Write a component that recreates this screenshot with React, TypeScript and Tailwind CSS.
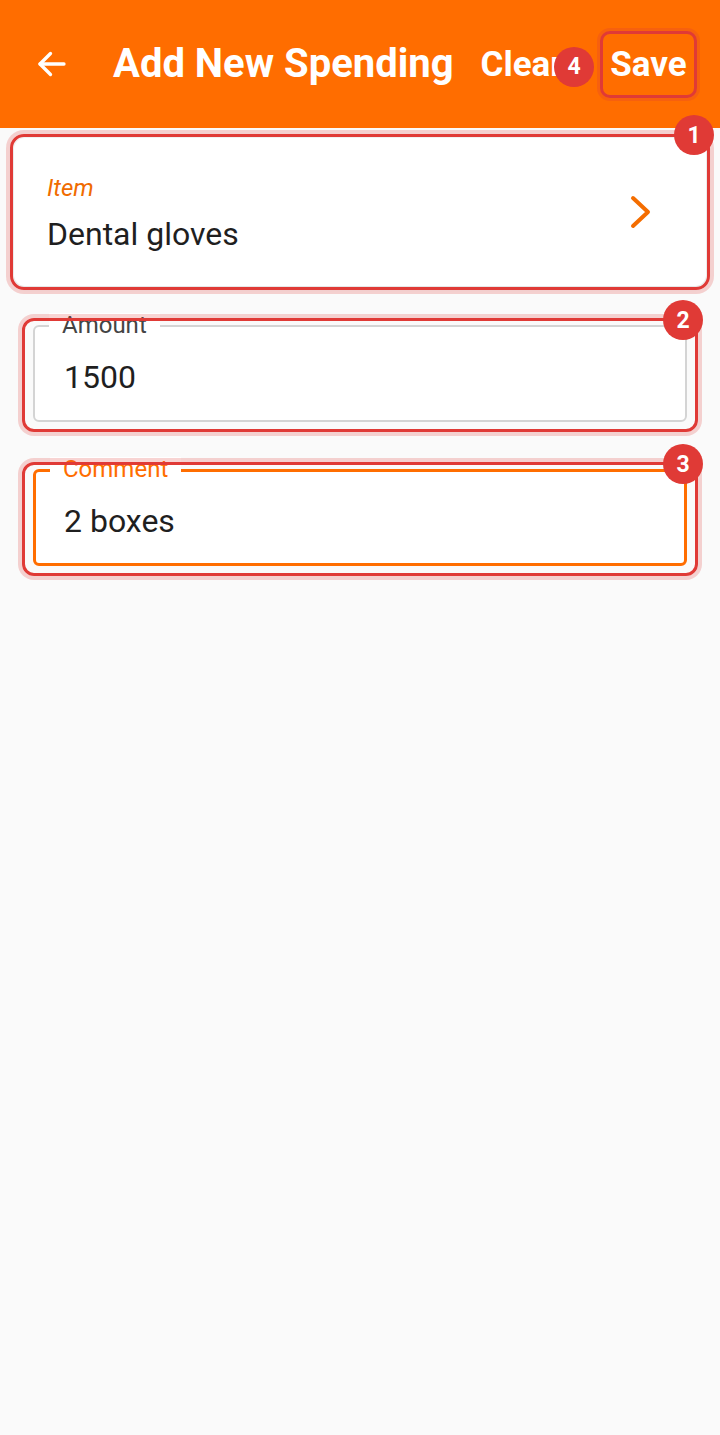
import React from "react";

function Badge({ n, className }: { n: string; className: string }) {
  return (
    <div
      className={
        "absolute w-[40px] h-[40px] rounded-full bg-[#e03a36] text-white flex items-center justify-center text-[23px] font-bold leading-none z-30 " +
        className
      }
    >
      {n}
    </div>
  );
}

function Highlight({ className }: { className: string }) {
  return (
    <div
      className={
        "absolute pointer-events-none z-20 border-[3px] border-[#e03a36] shadow-[0_0_0_4px_rgba(224,58,54,0.22)] " +
        className
      }
    />
  );
}

function OutlinedField({
  label,
  value,
  focused,
  badge,
}: {
  label: string;
  value: string;
  focused?: boolean;
  badge: string;
}) {
  return (
    <div className="relative mx-[19px] h-[97px]">
      <div
        className={
          "relative h-full rounded-[6px] bg-white flex items-center pt-[6px] " +
          (focused
            ? "border-[3px] border-[#ff6d00] pl-[28px]"
            : "border-[2px] border-[#d4d4d4] pl-[29px]")
        }
      >
        <span
          className={
            "absolute left-[14px] -translate-y-1/2 bg-white px-[13px] text-[24px] leading-none " +
            (focused ? "text-[#ff6d00] top-[-3px]" : "text-[#444] top-[-2px]")
          }
        >
          {label}
        </span>
        <span className="text-[#1f1f1f] text-[32px] leading-none">{value}</span>
      </div>
      <Highlight className="top-[-7px] left-[-11px] right-[-11px] bottom-[-10px] rounded-[12px]" />
      <Badge n={badge} className="right-[-16px] top-[-25px]" />
    </div>
  );
}

export default function App() {
  return (
    <div
      className="w-[720px] h-[1435px] bg-[#fafafa] overflow-hidden flex flex-col"
      style={{ fontFamily: "Roboto, 'Noto Sans', sans-serif" }}
    >
      {/* Header */}
      <header className="h-[128px] shrink-0 bg-[#ff6d00] flex items-center pl-[34px] pr-[23px]">
        <svg
          width="36"
          height="36"
          viewBox="0 0 24 24"
          fill="none"
          stroke="white"
          strokeWidth="2.2"
          strokeLinecap="round"
          strokeLinejoin="round"
        >
          <path d="M20 12H4" />
          <path d="M11 5l-7 7 7 7" />
        </svg>
        <div className="ml-[43px] text-white font-bold text-[40px] leading-none">
          Add New Spending
        </div>
        <div className="ml-[27px] text-white font-bold text-[35px] leading-none">Clear</div>
        <div className="relative ml-auto w-[97px] h-[67px] rounded-[10px] border-[3px] border-[#e03a36] shadow-[0_0_0_3px_rgba(224,58,54,0.25)] flex items-center justify-center bg-[#ff6d00]">
          <span className="text-white font-bold text-[35px] leading-none">Save</span>
          <Badge n="4" className="left-[-49px] top-[13px]" />
        </div>
      </header>

      <main className="flex flex-col px-[14px] pt-[10px] gap-[39px]">
        {/* Item card */}
        <div className="relative h-[148px]">
          <div className="h-full rounded-[11px] bg-white shadow-[0_1px_5px_rgba(0,0,0,0.13)] flex items-center pl-[33px] pr-[54px]">
            <div className="flex-1 flex flex-col gap-[18px] pt-[2px]">
              <span className="italic text-[#f06b00] text-[24px] leading-none">Item</span>
              <span className="text-[#1f1f1f] text-[32px] leading-none">Dental gloves</span>
            </div>
            <svg
              width="22"
              height="34"
              viewBox="0 0 22 34"
              fill="none"
              stroke="#f46d00"
              strokeWidth="4"
              strokeLinecap="round"
              strokeLinejoin="round"
            >
              <path d="M3 3l15 14L3 31" />
            </svg>
          </div>
          <Highlight className="-inset-[4px] rounded-[14px]" />
          <Badge n="1" className="right-[-8px] top-[-23px]" />
        </div>

        <div className="flex flex-col gap-[47px]">
          <OutlinedField label="Amount" value="1500" badge="2" />
          <OutlinedField label="Comment" value="2 boxes" badge="3" focused />
        </div>
      </main>
    </div>
  );
}
